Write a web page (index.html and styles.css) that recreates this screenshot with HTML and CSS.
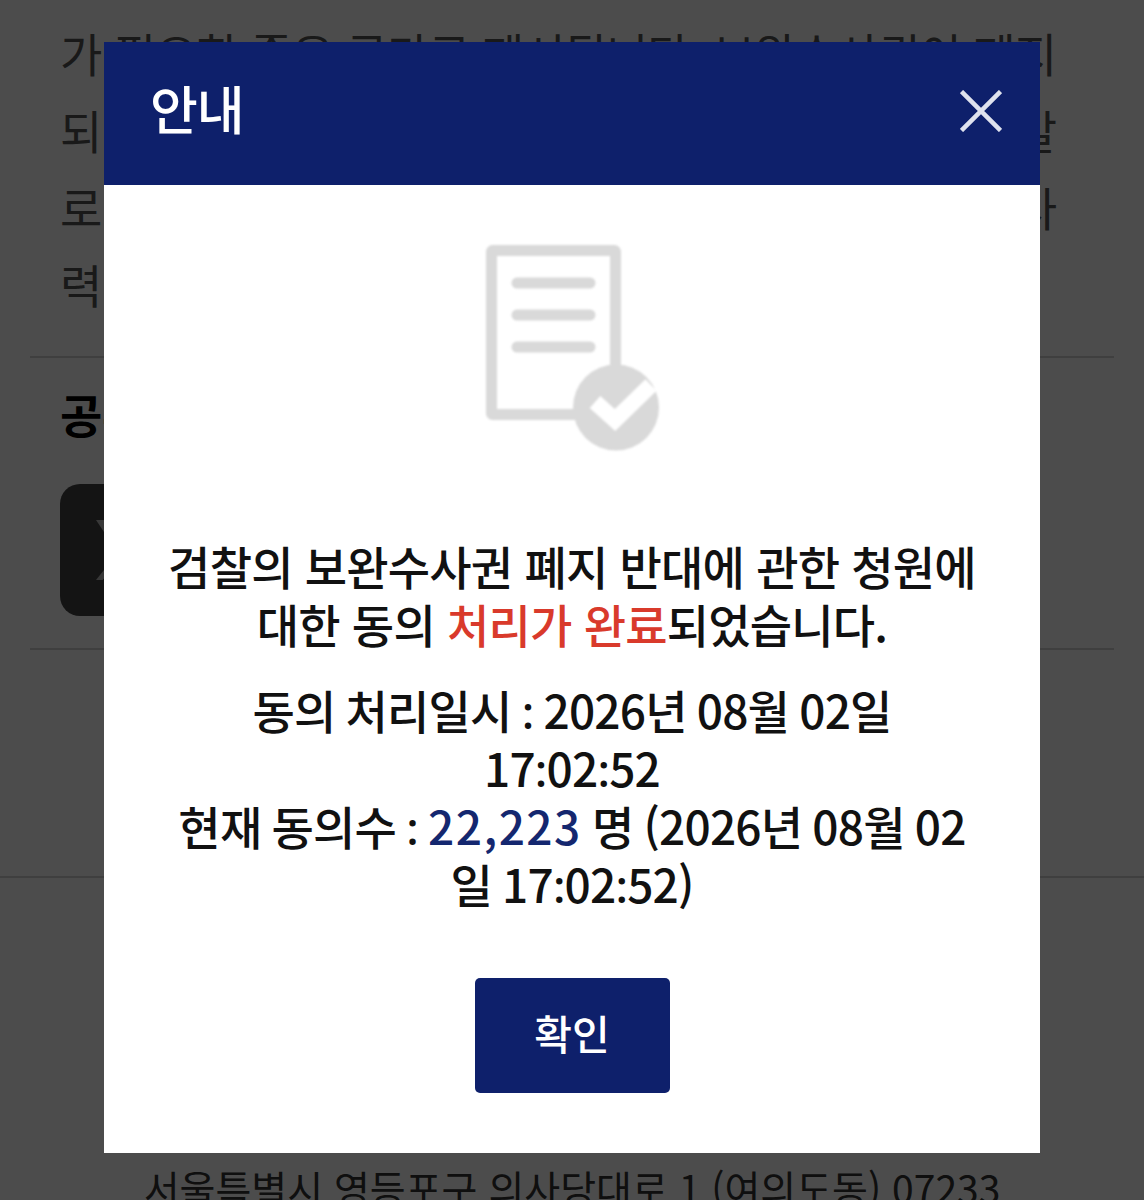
FILE: index.html

```html
<!DOCTYPE html>
<html lang="ko">
<head>
  <meta charset="UTF-8" />
  <meta name="viewport" content="width=device-width, initial-scale=1.0"/>
  <title>안내</title>
  <link rel="stylesheet" href="styles.css">
</head>
<body>

<div class="page">
  <div class="petition-text">
    <p>가 필요한 좋은 국가로 제시됩니다. 보완수사권이 폐지</p>
    <p>되면 수사기관의 책임 있는 판단이 어려워져 사건이 갈</p>
    <p>로 길어지게 되고 피해자 권리 보호와 수사 역량이 사</p>
    <p>력</p>
  </div>
  <div class="share">
    <h3>공유하기</h3>
    <div class="share-x">
      <svg viewBox="0 0 24 24" width="80" height="80">
        <path fill="#bbb" d="M3 3h6l12 18h-6z M19 3h2l-7.5 8.6-1.2-1.7z M3 21h2l6.6-7.6-1.2-1.7z"/>
      </svg>
    </div>
  </div>
  <footer class="footer">서울특별시 영등포구 의사당대로 1 (여의도동) 07233</footer>
</div>

<div class="overlay">
  <div class="modal">
    <div class="modal-head">
      <h2>안내</h2>
      <button class="modal-close" aria-label="닫기">
        <svg viewBox="0 0 42 42" width="42" height="42">
          <path d="M1.5 1.5 L40.5 40.5 M40.5 1.5 L1.5 40.5" stroke="#dfe2ee" stroke-width="4.5" fill="none"/>
        </svg>
      </button>
    </div>
    <div class="modal-body">
      <svg class="done-icon" viewBox="485 245 174 206" width="174" height="206">
        <rect x="491.5" y="250.5" width="124" height="164" rx="1" fill="none" stroke="#d9d9d9" stroke-width="11"/>
        <path d="M517 283H590 M517 315H590 M517 347H590" stroke="#d9d9d9" stroke-width="11" stroke-linecap="round"/>
        <circle cx="616" cy="407.5" r="43" fill="#d9d9d9"/>
        <path d="M595 402 L615 420 L651 385" fill="none" stroke="#fff" stroke-width="16"/>
      </svg>
      <p class="msg">검찰의 보완수사권 폐지 반대에 관한 청원에 대한 동의 <span class="red">처리가 완료</span>되었습니다.</p>
      <p class="msg info">동의 처리일시 <span class="colon">:</span> 2026년 08월 02일 17<span class="colon">:</span>02<span class="colon">:</span>52<br>현재 동의수 <span class="colon">:</span> <span class="navy">22,223</span> 명 (2026년 08월 02일 17<span class="colon">:</span>02<span class="colon">:</span>52)</p>
      <button class="btn-ok">확인</button>
    </div>
  </div>
</div>

</body>
</html>
```

FILE: styles.css

```css
html, body {
  margin: 0;
  padding: 0;
  height: 1200px;
  overflow: hidden;
}

body {
  background: #fff;
  font-family: "Noto Sans CJK KR", "Noto Sans", sans-serif;
}

.page {
  color: #555;
}

.petition-text {
  padding: 14px 88px 34px 60px;
}

.petition-text p {
  margin: 0;
  font-size: 46px;
  line-height: 77px;
  letter-spacing: -1px;
  white-space: nowrap;
  width: 996px;
  text-align: justify;
  text-align-last: justify;
}

.petition-text p:last-child {
  text-align-last: left;
}

.share {
  margin: 0 30px;
  padding: 23px 30px 32px;
  border-top: 2px solid #d4d4d4;
  border-bottom: 2px solid #d4d4d4;
}

.share h3 {
  margin: 0 0 39px;
  color: #000;
  font-size: 46px;
  line-height: 64px;
  font-weight: 700;
}

.share-x {
  width: 132px;
  height: 132px;
  border-radius: 20px;
  background: #444;
  display: flex;
  align-items: center;
  justify-content: center;
}

.footer {
  margin-top: 226px;
  padding-top: 284px;
  border-top: 2px solid #d4d4d4;
  color: #333;
  text-align: center;
  font-size: 39px;
  line-height: 50px;
}

.overlay {
  position: fixed;
  top: 0;
  left: 0;
  right: 0;
  bottom: 0;
  background: rgba(0,0,0,0.7);
  display: flex;
  justify-content: center;
  align-items: flex-start;
  padding-top: 42px;
}

.modal {
  width: 936px;
  background: #fff;
}

.modal-head {
  height: 137px;
  padding: 0 38px 6px 46px;
  background: #0e206b;
  color: #fff;
  display: flex;
  align-items: center;
  justify-content: space-between;
}

.modal-head h2 {
  margin: 0 0 6px;
  font-size: 52px;
  font-weight: 500;
  letter-spacing: -1px;
}

.modal-close {
  background: none;
  border: none;
  padding: 0;
  display: flex;
}

.modal-body {
  display: flex;
  flex-direction: column;
  align-items: center;
  padding: 60px;
}

.done-icon {
  display: block;
  margin-bottom: 85px;
  filter: blur(0.8px);
}

.msg {
  margin: 0;
  color: #111;
  font-size: 46px;
  font-weight: 500;
  line-height: 58px;
  text-align: center;
  letter-spacing: -0.8px;
}

.msg.info {
  margin-top: 28px;
  word-spacing: -2px;
}

.colon {
  font-family: "Noto Sans", sans-serif;
  line-height: 0;
}

.red {
  color: #d93a2b;
}

.navy {
  color: #14276f;
  letter-spacing: 1.5px;
}

.btn-ok {
  margin-top: 66px;
  width: 195px;
  height: 115px;
  padding: 0 0 8px;
  background: #0e206b;
  color: #fff;
  border: none;
  border-radius: 5px;
  font-family: inherit;
  font-size: 41px;
  font-weight: 500;
}
```
